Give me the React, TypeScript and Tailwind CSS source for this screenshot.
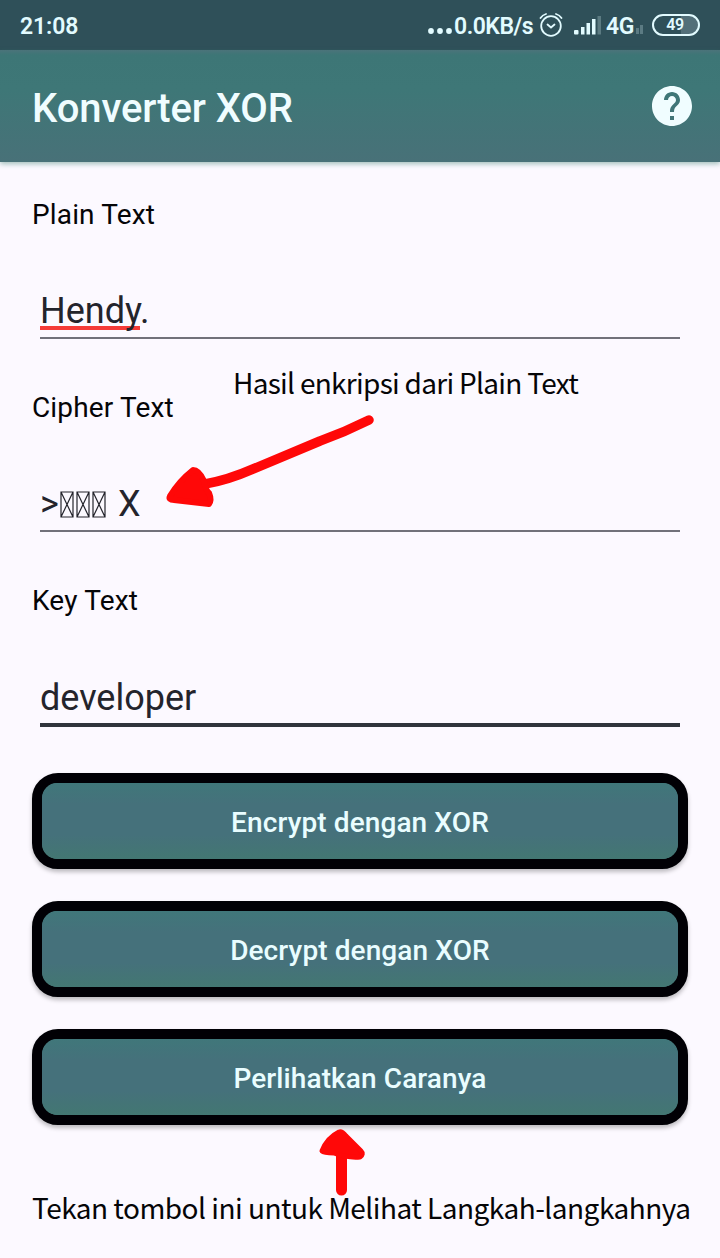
import type { ReactNode } from "react";
import { MdHelp } from "react-icons/md";

function StatusBar() {
  return (
    <div className="flex h-[50px] items-center justify-between bg-[#2f5059] pl-5 pr-5 text-[#e2fbff]">
      <span className="pt-[3px] text-[23px] leading-none font-semibold tracking-[-0.1px]">21:08</span>
      <div className="flex items-center">
        <svg className="mt-[12px] h-[6px] w-[26px]" viewBox="0 0 26 6" fill="currentColor">
          <circle cx="3" cy="3" r="2.9" />
          <circle cx="12" cy="3" r="2.9" />
          <circle cx="21" cy="3" r="2.9" />
        </svg>
        <span className="w-[81px] pt-[3px] text-[23px] leading-none font-semibold tracking-[-0.5px] whitespace-nowrap">0.0KB/s</span>
        <svg className="ml-[4px] h-[26px] w-[24px]" viewBox="0 0 24 26" fill="none" stroke="currentColor" strokeWidth="1.8" strokeLinecap="round">
          <circle cx="12" cy="14" r="9.8" />
          <path d="M8.500 12.5l3.500 3 3.500-3" />
          <path d="M1.500 6Q3.500 3 7 2M22.500 6Q20.500 3 17 2" />
        </svg>
        <svg className="ml-[11px] mt-[1px] h-[20px] w-[28px]" viewBox="0 0 28 20" fill="currentColor">
          <rect x="0" y="14" width="4.500" height="4.500" rx="1" />
          <rect x="7" y="11" width="3.500" height="7.500" />
          <rect x="12.500" y="7" width="3.500" height="11.500" />
          <rect x="18" y="3" width="3.500" height="15.500" />
          <rect x="23.500" y="0" width="3.500" height="18.500" opacity=".25" />
        </svg>
        <span className="ml-[4px] w-[29px] pt-[3px] text-[23px] leading-none font-semibold tracking-[-0.5px]">4G</span>
        <svg className="mt-[8px] h-[10px] w-[8px] opacity-25" viewBox="0 0 8 10" fill="currentColor">
          <rect x="1" y="4" width="3" height="6" />
          <rect x="5" y="1" width="3" height="9" />
        </svg>
        <span className="ml-[9px] flex h-[22px] w-[48px] items-center justify-center rounded-full border-2 border-[#e2fbff] bg-[linear-gradient(90deg,#2f5059_60%,#526f79_62%)] text-[16px] leading-none font-semibold">
          <span className="pr-[2px] tracking-[-0.3px]">49</span>
        </span>
      </div>
    </div>
  );
}

function Field({ label, focused = false, children }: { label: string; focused?: boolean; children: ReactNode }) {
  return (
    <section className="h-[193px] px-8">
      <div className="flex h-[38px] items-center pt-[2px] text-[28px] leading-none tracking-[0.15px] text-[#050507]">{label}</div>
      <div className={focused ? "mx-2 mt-[54px] h-[50px] text-[36px] leading-[50px] text-[#24242c]" : "mx-2 mt-[53px] h-[50px] text-[36px] leading-[50px] text-[#24242c]"}>{children}</div>
      <div className={focused ? "mx-2 h-1 bg-[#30343c]" : "mx-2 mt-[1px] h-[2px] bg-[#71717a]"} />
    </section>
  );
}

function MissingGlyph() {
  return (
    <svg className="h-[27px] w-[14px]" viewBox="0 0 14 27" fill="none" stroke="#24242c" strokeWidth="1.2">
      <path d="M1 1h12v25H1zM1 1l12 25M13 1L1 26" />
    </svg>
  );
}

function ActionButton({ children }: { children: ReactNode }) {
  return (
    <button className="flex h-24 w-full items-center justify-center rounded-[26px] border-[10px] border-[#010005] bg-[#45717a] text-[28px] leading-none font-medium tracking-[0.1px] text-[#e9fdff] shadow-[0_3px_4px_rgba(0,0,0,0.25)]">
      <span className="h-full w-full rounded-[15px] bg-[linear-gradient(180deg,#40777a_0%,#45717b_28%,#45717b_68%,#437772_100%)] pt-[2px] leading-[76px]">{children}</span>
    </button>
  );
}

export default function App() {
  return (
    <div className="relative h-[1258px] w-[720px] overflow-hidden bg-[#fcf9ff] font-['Roboto',sans-serif]">
      <StatusBar />
      <header className="flex h-28 items-center justify-between bg-[linear-gradient(180deg,#4b737a_0px,#3d7676_5px,#3e7777_35%,#487178_100%)] pl-8 pr-6 text-[#f0fdff] shadow-[0_2px_5px_rgba(50,120,105,0.45)]">
        <h1 className="pt-[6px] text-[40px] leading-none font-medium tracking-[-0.1px]">Konverter XOR</h1>
        <MdHelp className="size-12" />
      </header>
      <main className="pt-[33px]">
        <Field label="Plain Text">
          <span className="inline-block h-[50px] bg-[linear-gradient(#f53b38,#f53b38)] bg-[length:100px_4px] bg-[position:0_40px] bg-no-repeat">Hendy.</span>
        </Field>
        <Field label="Cipher Text">
          <div className="flex h-full items-center">
            <span className="w-5">&gt;</span>
            <span className="flex gap-[2px]">
              <MissingGlyph />
              <MissingGlyph />
              <MissingGlyph />
            </span>
            <span className="ml-[12px]">X</span>
          </div>
        </Field>
        <Field label="Key Text" focused>developer</Field>
        <div className="-mt-[1px] flex flex-col gap-8 px-8">
          <ActionButton>Encrypt dengan XOR</ActionButton>
          <ActionButton>Decrypt dengan XOR</ActionButton>
          <ActionButton>Perlihatkan Caranya</ActionButton>
        </div>
      </main>
      <p className="absolute top-[362px] left-[233px] font-['Noto_Sans_CJK_SC',sans-serif] text-[28px] leading-10 tracking-[-0.71px] whitespace-nowrap text-[#050507]">Hasil enkripsi dari Plain Text</p>
      <svg className="absolute top-[410px] left-[160px] h-[102px] w-[220px]" viewBox="160 410 220 102" fill="#ff0808" stroke="#ff0808" strokeLinecap="round" strokeLinejoin="round">
        <path d="M369 420Q345 432 320 441L253 469Q228 480 205 484" fill="none" strokeWidth="9.500" />
        <path d="M193 470Q179 481 170 496Q168 500 174 500L209 504Q212 500 209 493Q206 491 204 481Q199 470 193 470Z" strokeWidth="6" />
      </svg>
      <svg className="absolute top-[1126px] left-[316px] h-[74px] w-[54px]" viewBox="316 1126 54 74" fill="#ff0808" stroke="#ff0808" strokeLinecap="round" strokeLinejoin="round">
        <path d="M341.500 1150V1190" fill="none" strokeWidth="11" />
        <path d="M339 1132Q327 1138 322 1151Q324 1153 334 1153Q347 1158 360 1157Q364 1154 361 1151L346 1136Q342 1131 339 1132Z" strokeWidth="5" />
      </svg>
      <p className="absolute top-[1187px] left-[32px] font-['Noto_Sans_CJK_SC',sans-serif] text-[28px] leading-10 tracking-[-0.52px] whitespace-nowrap text-[#050507]">Tekan tombol ini untuk Melihat Langkah-langkahnya</p>
    </div>
  );
}
